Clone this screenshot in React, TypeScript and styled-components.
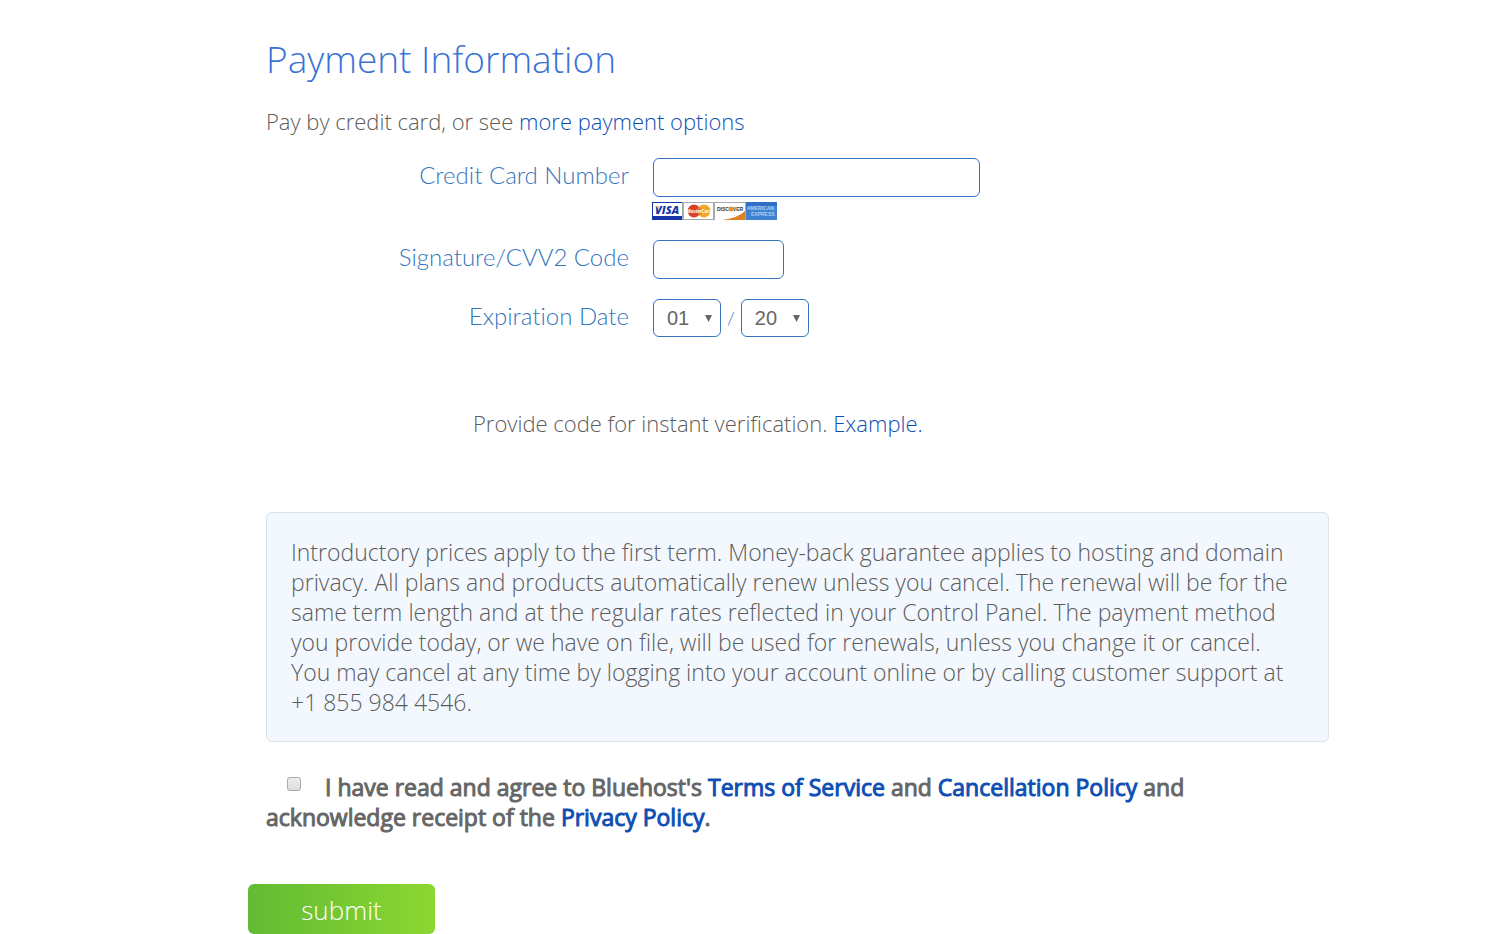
import React from "react";
import styled, { createGlobalStyle } from "styled-components";

const Global = createGlobalStyle`
  * { box-sizing: border-box; }
  body { margin: 0; background: #fff; color: #5c5c5c; font-family: "Open Sans", sans-serif; font-weight: 300; }
`;
const Page = styled.form`
  padding: 35px 175px 0 248px;
`;
const Content = styled.div`
  padding-left: 18px;
`;
const Title = styled.h1`
  margin: 0;
  font-size: 37px;
  line-height: 48px;
  font-weight: 300;
  color: #3a72d4;
`;
const Link = styled.a`
  color: #0f4fb3;
  text-decoration: none;
`;
const Intro = styled.p`
  margin: 23px 0 22px;
  font-size: 22px;
  line-height: 30px;
`;
const Fields = styled.div`
  display: grid;
  grid-template-columns: 363px 1fr;
  column-gap: 24px;
  row-gap: 20px;
  align-items: start;
`;
const Label = styled.label`
  text-align: right;
  font-family: Lato, sans-serif;
  font-size: 24px;
  line-height: 34px;
  font-weight: 300;
  font-variant-ligatures: none;
  color: #3575bd;
`;
const TextBox = styled.input<{ $width: number }>`
  display: block;
  width: ${(p) => p.$width}px;
  height: 39px;
  padding: 0 12px;
  border: 1px solid #3575bd;
  border-radius: 6px;
  font: 20px "Liberation Sans", sans-serif;
  color: #666;
  background: #fff;
`;
const CardStrip = styled.svg`
  display: block;
  margin: 5px 0 0 -1px;
`;
const DateRow = styled.div`
  display: flex;
  align-items: center;
  gap: 6px;
  font-family: Lato, sans-serif;
  font-size: 18px;
  color: #3575bd;
`;
const SelectWrap = styled.span`
  display: grid;
  align-items: center;
`;
const Select = styled.select`
  grid-area: 1 / 1;
  appearance: none;
  width: 68px;
  height: 38px;
  padding: 0 0 0 13px;
  border: 1px solid #3575bd;
  border-radius: 6px;
  background: #fff;
  color: #666;
  font: 20px "Liberation Sans", sans-serif;
`;
const Arrow = styled.svg`
  grid-area: 1 / 1;
  justify-self: end;
  margin-right: 9px;
  pointer-events: none;
`;
const Verify = styled.p`
  margin: 71px 0 74px 207px;
  font-size: 22px;
  line-height: 30px;
`;
const Notice = styled.p`
  margin: 0;
  padding: 24px;
  border: 1px solid #dbe3ea;
  border-radius: 6px;
  background: #f3f8ff;
  font-size: 23px;
  line-height: 30px;
`;
const Agreement = styled.div`
  margin-top: 30px;
  font-size: 23px;
  line-height: 30px;
  font-weight: 400;
  color: #666;
  -webkit-text-stroke: 1px currentColor;
`;
const Check = styled.input`
  appearance: none;
  width: 14px;
  height: 14px;
  margin: 0 24px 0 21px;
  vertical-align: 5px;
  border: 1px solid #aaa;
  border-radius: 3px;
  background: linear-gradient(#ededed, #dedede);
`;
const Submit = styled.button`
  display: block;
  width: 187px;
  height: 50px;
  margin-top: 52px;
  padding: 2px 0 0;
  border: 0;
  border-radius: 6px;
  background: linear-gradient(to right, #62bb33, #8cd731);
  color: #fff;
  font: 300 26px "Open Sans", sans-serif;
`;

function Cards() {
  return (
    <CardStrip width="125" height="18" viewBox="0 0 125 18" role="img" aria-label="Visa, MasterCard, Discover, American Express">
      <rect width="125" height="18" fill="#aaa" />
      <rect x="1" y="1" width="29" height="14" fill="#fff" />
      <rect y="14" width="30" height="4" fill="#1636a8" />
      <rect width="1" height="18" fill="#1636a8" />
      <rect width="30" height="1" fill="#1636a8" />
      <text x="3" y="12" fontFamily="Open Sans, sans-serif" fontSize="11" fontWeight="800" fontStyle="italic" fill="#1636a8">VISA</text>
      <path d="M3 4h3l1 3Z" fill="#e9a23a" />
      <rect x="32" y="1" width="29" height="16" fill="#fff" />
      <circle cx="42" cy="9" r="6.5" fill="#d9412b" />
      <circle cx="52" cy="9" r="6.5" fill="#f3a52c" />
      <path d="M47 5v8M45 7h5M45 11h5" stroke="#e2742b" />
      <text x="35" y="11" fontFamily="Liberation Sans, sans-serif" fontSize="4.5" fontWeight="700" fill="#fff">MasterCard</text>
      <rect x="63" y="1" width="30" height="17" fill="#fff" />
      <path d="M93 9v9H70Q86 16 93 9Z" fill="#dd8224" />
      <text x="65" y="9" fontFamily="Liberation Sans, sans-serif" fontSize="5" fontWeight="700" fill="#333">DISCOVER</text>
      <circle cx="79" cy="7" r="2.5" fill="#e99535" />
      <rect x="94" width="31" height="18" fill="#3f82d0" />
      <path d="M94 0h31v4H94Z" fill="#2f6fc4" />
      <text x="95" y="8" fontFamily="Liberation Sans, sans-serif" fontSize="5" fontWeight="700" fill="#a9cdf5">AMERICAN</text>
      <text x="99" y="14" fontFamily="Liberation Sans, sans-serif" fontSize="5" fontWeight="700" fill="#a9cdf5">EXPRESS</text>
    </CardStrip>
  );
}

function DatePicker({ id, label, first, options }: { id?: string; label: string; first: string; options: string[] }) {
  return (
    <SelectWrap>
      <Select id={id} aria-label={label} defaultValue={first}>
        {options.map((o) => <option key={o}>{o}</option>)}
      </Select>
      <Arrow width="7" height="7" viewBox="0 0 7 7"><path d="M0 0H7L3.5 7Z" fill="#666" /></Arrow>
    </SelectWrap>
  );
}

const months = Array.from({ length: 12 }, (_, i) => String(i + 1).padStart(2, "0"));
const years = Array.from({ length: 12 }, (_, i) => String(i + 20));

export default function App() {
  return (
    <>
      <Global />
      <Page onSubmit={(e) => e.preventDefault()}>
        <Content>
          <Title>Payment Information</Title>
          <Intro>Pay by credit card, or see <Link href="#options">more payment options</Link></Intro>
          <Fields>
            <Label htmlFor="card">Credit Card Number</Label>
            <div>
              <TextBox id="card" $width={327} />
              <Cards />
            </div>
            <Label htmlFor="cvv">Signature/CVV2 Code</Label>
            <TextBox id="cvv" $width={131} />
            <Label htmlFor="month">Expiration Date</Label>
            <DateRow>
              <DatePicker id="month" label="Expiration month" first="01" options={months} />
              <span>/</span>
              <DatePicker label="Expiration year" first="20" options={years} />
            </DateRow>
          </Fields>
          <Verify>Provide code for instant verification. <Link href="#example">Example.</Link></Verify>
          <Notice>
            Introductory prices apply to the first term. Money-back guarantee applies to hosting and domain privacy. All plans and products automatically renew unless you cancel. The renewal will be for the same term length and at the regular rates reflected in your Control Panel. The payment method you provide today, or we have on file, will be used for renewals, unless you change it or cancel. You may cancel at any time by logging into your account online or by calling customer support at +1 855 984 4546.
          </Notice>
          <Agreement>
            <Check type="checkbox" id="agree" />
            <label htmlFor="agree">I have read and agree to Bluehost's </label>
            <Link href="#terms">Terms of Service</Link> <span>and</span> <Link href="#cancellation">Cancellation Policy</Link> <span>and</span> <span>acknowledge receipt of the</span> <Link href="#privacy">Privacy Policy</Link>.
          </Agreement>
        </Content>
        <Submit type="submit">submit</Submit>
      </Page>
    </>
  );
}
